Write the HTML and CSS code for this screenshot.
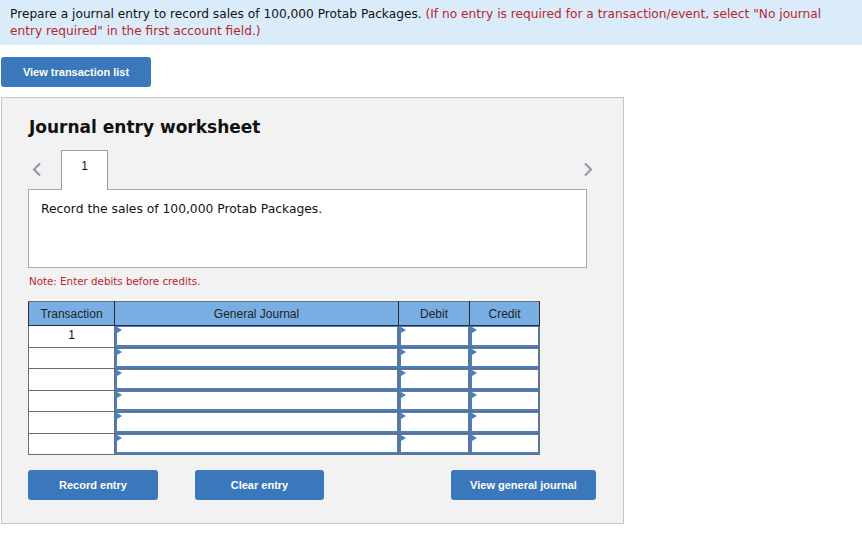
FILE: index.html
```html
<!DOCTYPE html>
<html lang="en">
<head>
  <meta charset="UTF-8">
  <meta name="viewport" content="width=device-width, initial-scale=1.0">
  <title>Journal entry worksheet</title>
  <link rel="stylesheet" href="styles.css">
</head>
<body>
  <div class="prompt">
    Prepare a journal entry to record sales of 100,000 Protab Packages.
    <span class="hint">(If no entry is required for a transaction/event, select "No journal entry required" in the first account field.)</span>
  </div>

  <div class="page">
    <button class="btn btn-list">View transaction list</button>

    <div class="worksheet">
      <h2>Journal entry worksheet</h2>

      <div class="tabs">
        <span class="arrow prev">
          <svg width="10" height="15" viewBox="0 0 10 15"><path d="M8 1.5 L2 7.5 L8 13.5" fill="none" stroke="#8d97a5" stroke-width="2"/></svg>
        </span>
        <div class="tab">1</div>
        <span class="arrow next">
          <svg width="10" height="15" viewBox="0 0 10 15"><path d="M2 1.5 L8 7.5 L2 13.5" fill="none" stroke="#8d97a5" stroke-width="2"/></svg>
        </span>
      </div>

      <div class="task">Record the sales of 100,000 Protab Packages.</div>

      <p class="note">Note: Enter debits before credits.</p>

      <table class="journal">
        <thead>
          <tr>
            <th class="col-trans">Transaction</th>
            <th class="col-gj">General Journal</th>
            <th class="col-debit">Debit</th>
            <th class="col-credit">Credit</th>
          </tr>
        </thead>
        <tbody id="journal-body"></tbody>
      </table>

      <div class="actions">
        <button class="btn btn-record">Record entry</button>
        <button class="btn btn-clear">Clear entry</button>
        <button class="btn btn-journal">View general journal</button>
      </div>
    </div>
  </div>

  <script>
    const body = document.getElementById('journal-body');
    for (let i = 0; i < 6; i++) {
      const row = document.createElement('tr');
      row.innerHTML = `
        <td class="trans">${i === 0 ? '1' : ''}</td>
        <td class="input"><div class="field"></div></td>
        <td class="input"><div class="field"></div></td>
        <td class="input"><div class="field"></div></td>`;
      body.appendChild(row);
    }
  </script>
</body>
</html>
```

FILE: styles.css
```css
body {
  margin: 0;
  padding: 0;
  background-color: #fff;
  font-family: "DejaVu Sans", Verdana, sans-serif;
  color: #111;
}
.prompt {
  background-color: #daecf9;
  width: 840px;
  padding: 6px 12px 5px 10px;
  font-size: 12.2px;
  line-height: 17px;
}
.hint {
  color: #b8262f;
}
.page {
  padding: 12px 1px 0 1px;
}
.btn {
  background-color: #3a77bb;
  color: white;
  border: none;
  border-radius: 3px;
  height: 30px;
  font-family: "Liberation Sans", Arial, sans-serif;
  font-weight: bold;
  font-size: 11px;
  cursor: pointer;
  padding: 0;
}
.btn-list {
  width: 150px;
  display: block;
}
.worksheet {
  margin-top: 10px;
  width: 568px;
  height: 407px;
  padding: 18px 27px 0 26px;
  background-color: #f2f2f2;
  border: 1px solid #c6c6c6;
}
h2 {
  margin: 0 0 0 1px;
  font-size: 17px;
  line-height: 22px;
  font-weight: bold;
}
.tabs {
  display: flex;
  align-items: center;
  height: 39px;
  margin-top: 12px;
  width: 569px;
}
.arrow {
  display: flex;
  align-items: center;
}
.arrow.prev {
  width: 29px;
  padding-left: 4px;
}
.arrow.next {
  margin-left: auto;
  padding-right: 4px;
}
.tab {
  align-self: stretch;
  width: 45px;
  background-color: #fff;
  border: 1px solid #9b9b9b;
  border-bottom: none;
  margin-bottom: -1px;
  position: relative;
  text-align: center;
  font-family: "Liberation Sans", Arial, sans-serif;
  font-size: 12px;
  line-height: 31px;
}
.task {
  width: 533px;
  height: 65px;
  padding: 12px 12px 0 12px;
  background-color: #fff;
  border: 1px solid #ababab;
  font-size: 12.3px;
  line-height: 15px;
}
.note {
  margin: 7px 0 0 1px;
  font-size: 10.3px;
  line-height: 13px;
  color: #b8262f;
}
.journal {
  margin-top: 13px;
  border-collapse: collapse;
  font-family: "Liberation Sans", Arial, sans-serif;
  font-size: 12px;
  border: 1px solid #6d6d6d;
}
.journal th {
  background-color: #79aee4;
  color: #222;
  font-weight: normal;
  height: 23px;
  padding: 0;
  border: 1px solid #2b2b2b;
  border-top-color: #6d6d6d;
}
.col-trans {
  width: 85px;
}
.col-gj {
  width: 283px;
}
.col-debit {
  width: 70px;
}
.col-credit {
  width: 69px;
}
.journal td {
  height: 20.5px;
  padding: 0;
  border: 1px solid #6d6d6d;
  background-color: #fff;
}
.journal td.trans {
  text-align: center;
  vertical-align: top;
  line-height: 19px;
}
.journal td.input {
  vertical-align: top;
}
.field {
  position: relative;
  height: 20.5px;
  box-sizing: border-box;
  border: 1px solid #4c7fc0;
  border-left-width: 2px;
  border-bottom-width: 2px;
}
.field::before {
  content: "";
  position: absolute;
  top: 0;
  left: 0;
  border-left: 5px solid #4c7fc0;
  border-top: 3px solid transparent;
  border-bottom: 3px solid transparent;
}
.actions {
  display: flex;
  margin-top: 15px;
}
.btn-record {
  width: 130px;
}
.btn-clear {
  width: 129px;
  margin-left: 37px;
}
.btn-journal {
  width: 145px;
  margin-left: auto;
}
```
